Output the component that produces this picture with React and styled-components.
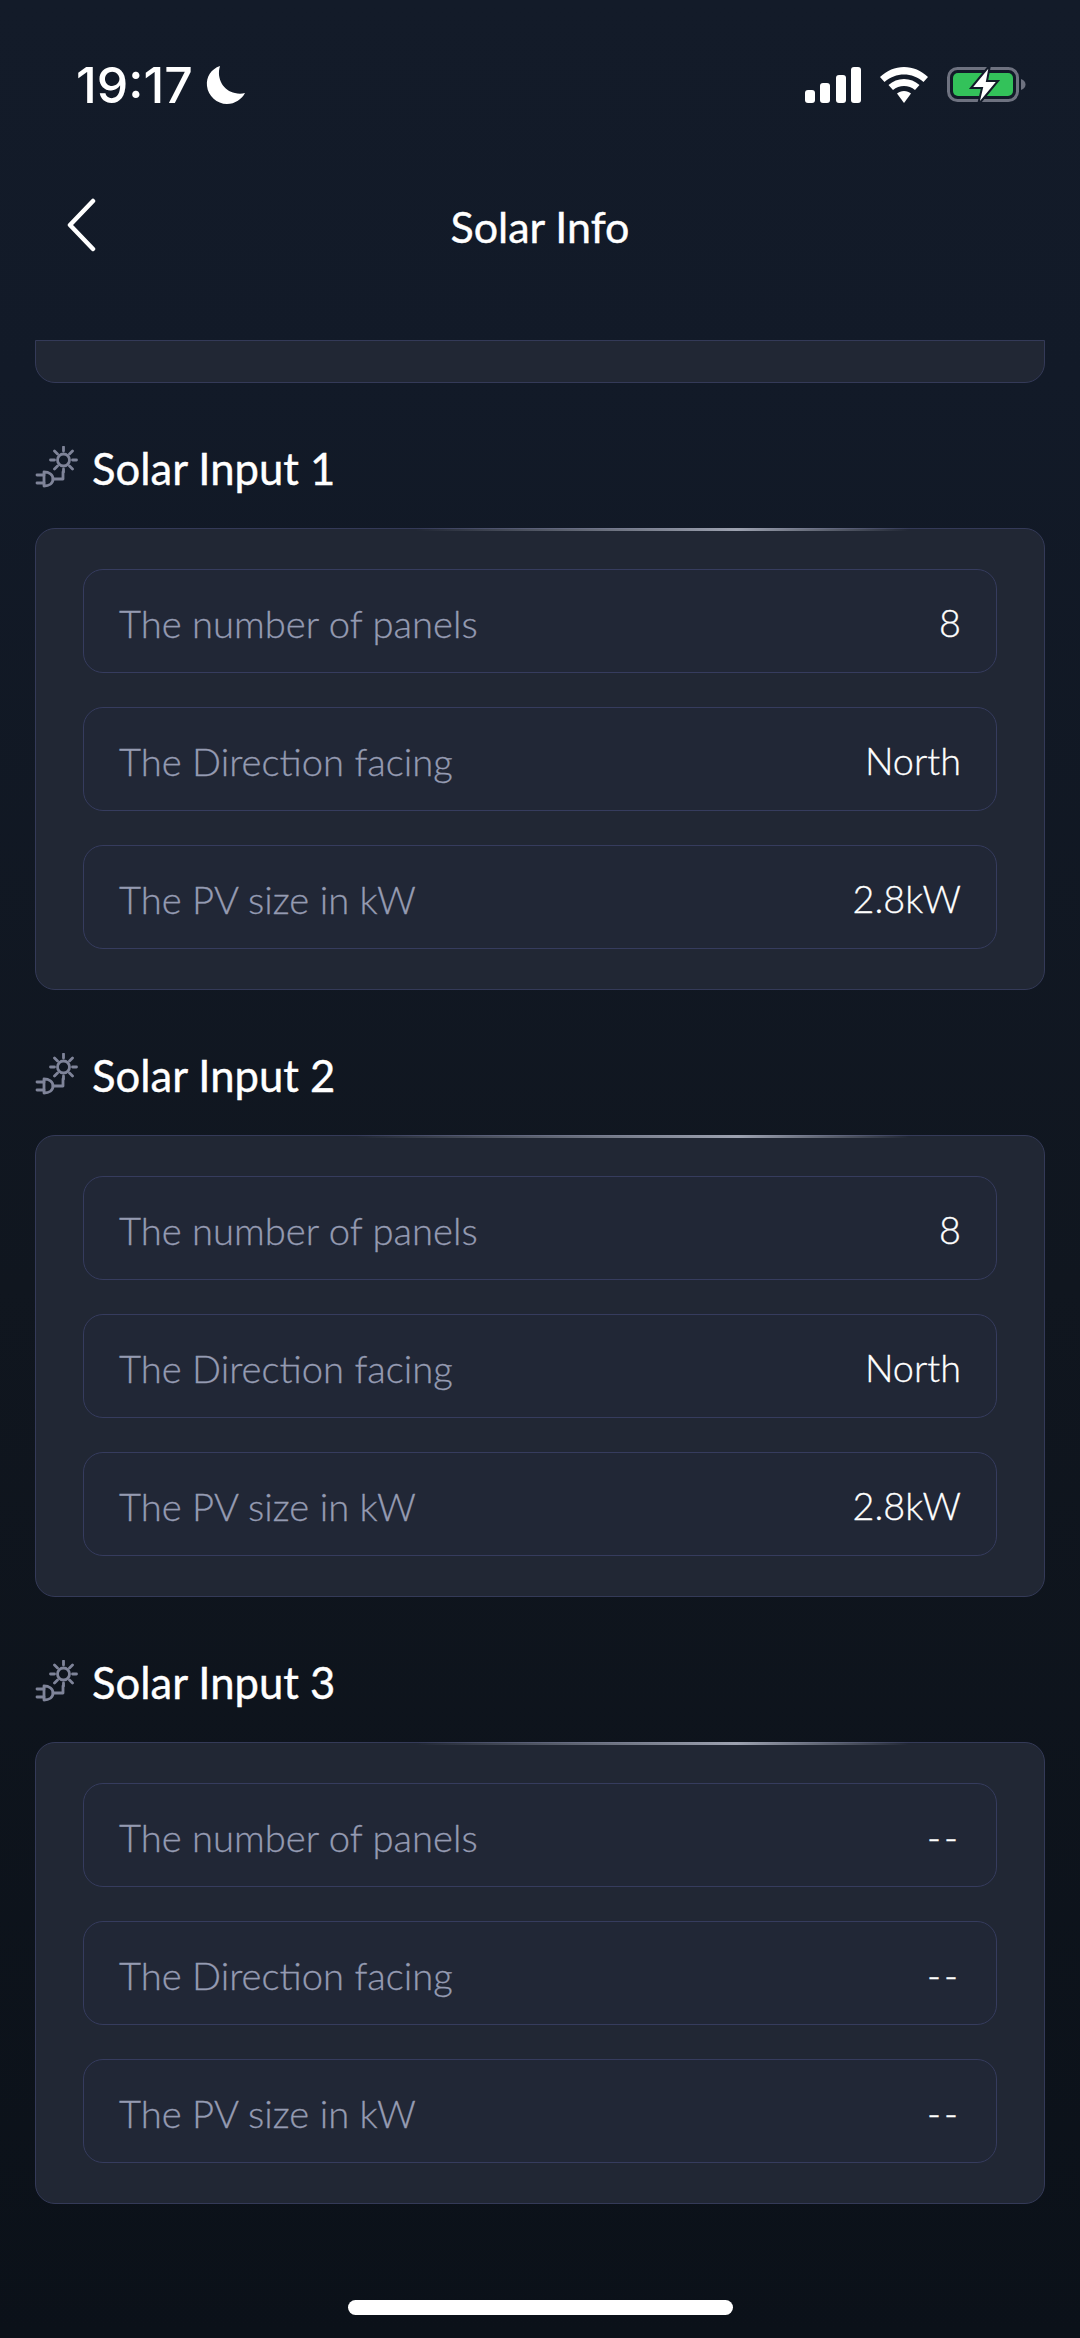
import React from "react";
import styled, { createGlobalStyle } from "styled-components";

const Global = createGlobalStyle`
  html, body {
    margin: 0;
    padding: 0;
    background: #0c121b;
  }
  * {
    box-sizing: border-box;
  }
`;

const Page = styled.div`
  position: relative;
  width: 1080px;
  height: 2338px;
  overflow: hidden;
  font-family: "Lato", "Noto Sans", sans-serif;
  background: linear-gradient(180deg, #131b29 0%, #121a28 16%, #10161f 55%, #0b1119 100%);
`;

const StatusBar = styled.div`
  display: flex;
  align-items: center;
  justify-content: space-between;
  height: 170px;
  padding: 0 53px 0 76px;
`;

const TimeGroup = styled.div`
  display: flex;
  align-items: center;
  gap: 13px;
`;

const Time = styled.span`
  font-family: "Inter", sans-serif;
  font-size: 50px;
  font-weight: 500;
  color: #fff;
`;

const StatusIcons = styled.div`
  display: flex;
  align-items: center;
  gap: 19px;
`;

const NavBar = styled.div`
  position: relative;
  display: flex;
  align-items: center;
  justify-content: center;
  height: 112px;
  margin-bottom: 58px;
`;

const BackIcon = styled.svg`
  position: absolute;
  left: 65px;
  top: 28px;
`;

const NavTitle = styled.h1`
  margin: 0;
  font-size: 43px;
  font-weight: 400;
  color: #fff;
  -webkit-text-stroke: 0.4px #fff;
`;

const Content = styled.div`
  display: flex;
  flex-direction: column;
  padding: 0 35px;
`;

const Stub = styled.div`
  height: 43px;
  margin-bottom: 56px;
  background: #212734;
  border: 1.5px solid #343a58;
  border-radius: 0 0 20px 20px;
`;

const Section = styled.section`
  display: flex;
  flex-direction: column;
  margin-bottom: 56px;
`;

const SectionHead = styled.div`
  display: flex;
  align-items: center;
  gap: 13px;
  height: 60px;
  padding-bottom: 2px;
  margin-bottom: 29px;
`;

const SectionTitle = styled.h2`
  margin: 0;
  font-size: 43.6px;
  font-weight: 400;
  color: #fff;
  -webkit-text-stroke: 0.4px #fff;
`;

const Card = styled.div`
  position: relative;
  display: flex;
  flex-direction: column;
  gap: 34px;
  padding: 40px 47px;
  background: #212734;
  border: 1.5px solid #343a58;
  border-radius: 20px;
  &::before {
    content: "";
    position: absolute;
    top: -1.5px;
    left: ${(p) => p.$glowLeft}px;
    right: 135px;
    height: 3px;
    background: linear-gradient(90deg, transparent, #9da2b0 ${(p) => p.$glowPeak}%, transparent);
  }
`;

const Row = styled.div`
  display: flex;
  align-items: center;
  justify-content: space-between;
  height: 104px;
  padding: 3px 35px 0;
  background: #212736;
  border: 1.5px solid #363c5e;
  border-radius: 20px;
`;

const Label = styled.span`
  font-size: 38.2px;
  font-weight: 300;
  color: #959bb2;
  -webkit-text-stroke: 0.3px #959bb2;
`;

const Value = styled.span`
  font-size: 37.8px;
  font-weight: 300;
  color: #fff;
  -webkit-text-stroke: 0.3px #fff;
  letter-spacing: ${(p) => (p.$empty ? "3px" : "0")};
`;

const HomeBar = styled.div`
  position: absolute;
  left: 348px;
  top: 2300px;
  width: 385px;
  height: 15px;
  background: #fff;
  border-radius: 8px;
`;

const SolarIcon = () => (
  <svg width="44" height="44" viewBox="0 0 44 44" fill="none" stroke="#7f8499" strokeWidth="2.8" strokeLinecap="round" strokeLinejoin="round">
    <circle cx="28.5" cy="14" r="6" />
    <path d="M28.5 1v4M28.5 23v3M15.5 14h4M37.5 14h4M19.5 5l3 3M34.5 20l3 3M37.5 5l-3 3M22.5 20l-3 3" />
    <path d="M9 26v14c5 0 9-2.5 9-7s-4-7-9-7z" />
    <path d="M2 29h7M2 37h7M18 33h10v-7" />
  </svg>
);

const Rows = [
  ["The number of panels", "8"],
  ["The Direction facing", "North"],
  ["The PV size in kW", "2.8kW"],
];

const sections = [
  { name: "Solar Input 1", empty: false, glowLeft: 380, glowPeak: 65 },
  { name: "Solar Input 2", empty: false, glowLeft: 320, glowPeak: 69 },
  { name: "Solar Input 3", empty: true, glowLeft: 380, glowPeak: 65 },
];

const App = () => (
  <Page>
    <Global />
    <StatusBar>
      <TimeGroup>
        <Time>19:17</Time>
        <svg width="40" height="40" viewBox="0 0 40 40">
          <path d="M14 1C5 4 0 12 1 21c1 10 10 18 20 18 8 0 15-5 18-11-3 1-7 1-10 0C18 26 10 14 14 1z" fill="#fff" />
        </svg>
      </TimeGroup>
      <StatusIcons>
        <svg width="56" height="36" viewBox="0 0 56 36" fill="#fff">
          <rect x="0" y="23" width="10" height="13" rx="3" />
          <rect x="15" y="16" width="10" height="20" rx="3" />
          <rect x="31" y="8" width="10" height="28" rx="3" />
          <rect x="46" y="0" width="10" height="36" rx="3" />
        </svg>
        <svg width="48" height="36" viewBox="0 0 48 36" fill="#fff">
          <path d="M24 0c9 0 17 3.5 24 10l-4.5 5C38 10 31 7.5 24 7.5S10 10 4.5 15L0 10C7 3.5 15 0 24 0z" />
          <path d="M24 12c6 0 11 2 15.5 6L35 23c-3-2.7-7-4-11-4s-8 1.3-11 4l-4.5-5C13 14 18 12 24 12z" />
          <path d="M24 24c2.8 0 5 1 7 2.5L24 36l-7-9.5C19 25 21.2 24 24 24z" />
        </svg>
        <svg width="80" height="42" viewBox="0 0 80 42">
          <rect x="1.5" y="4.5" width="69" height="32" rx="9" fill="none" stroke="#6e7280" strokeWidth="3" />
          <rect x="6" y="9" width="60" height="23" rx="5" fill="#33c25a" />
          <path d="M74 15c3 1 4.5 3 4.500 5.500S77 25 74 26z" fill="#6e7280" />
          <path d="M43 1L24 24h11l-4 17 20-24H40z" fill="#fff" stroke="#131b29" strokeWidth="2" />
        </svg>
      </StatusIcons>
    </StatusBar>
    <NavBar>
      <BackIcon width="32" height="54" viewBox="0 0 32 54" fill="none" stroke="#fff" strokeWidth="4.5" strokeLinecap="round" strokeLinejoin="round">
        <path d="M28 3L5 27l23 24" />
      </BackIcon>
      <NavTitle>Solar Info</NavTitle>
    </NavBar>
    <Content>
      <Stub />
      {sections.map((s) => (
        <Section key={s.name}>
          <SectionHead>
            <SolarIcon />
            <SectionTitle>{s.name}</SectionTitle>
          </SectionHead>
          <Card $glowLeft={s.glowLeft} $glowPeak={s.glowPeak}>
            {Rows.map((r) => (
              <Row key={r[0]}>
                <Label>{r[0]}</Label>
                <Value $empty={s.empty}>{s.empty ? "--" : r[1]}</Value>
              </Row>
            ))}
          </Card>
        </Section>
      ))}
    </Content>
    <HomeBar />
  </Page>
);

export default App;
